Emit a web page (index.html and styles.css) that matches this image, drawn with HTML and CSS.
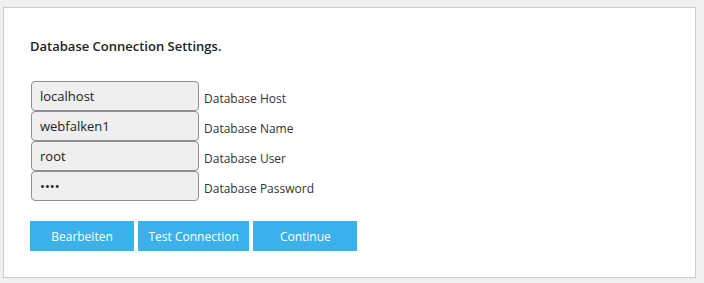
FILE: index.html
```html
<!DOCTYPE html>
<html lang="de">
<head>
    <meta charset="UTF-8">
    <meta name="viewport" content="width=device-width, initial-scale=1.0">
    <title>Database Connection</title>
    <link rel="stylesheet" href="styles.css">
</head>
<body>
    <div class="setup-box">
        <h2 class="setup-title">Database Connection Settings.</h2>

        <form class="db-form">
            <div class="field-row">
                <input type="text" class="db-input" value="localhost">
                <label class="db-label">Database Host</label>
            </div>
            <div class="field-row">
                <input type="text" class="db-input" value="webfalken1">
                <label class="db-label">Database Name</label>
            </div>
            <div class="field-row">
                <input type="text" class="db-input" value="root">
                <label class="db-label">Database User</label>
            </div>
            <div class="field-row">
                <input type="password" class="db-input" value="root">
                <label class="db-label">Database Password</label>
            </div>

            <div class="button-row">
                <button type="button" class="action-btn">Bearbeiten</button>
                <button type="button" class="action-btn">Test Connection</button>
                <button type="button" class="action-btn">Continue</button>
            </div>
        </form>
    </div>
</body>
</html>
```

FILE: styles.css
```css
:root {
    --page-bg: #f0f0f0;
    --box-border: #cccccc;
    --input-bg: #efefef;
    --input-border: #8f8f8f;
    --button-color: #3bb1eb;
    --text-color: #222222;
}

body {
    margin: 0;
    background-color: var(--page-bg);
    font-family: 'Open Sans', 'Noto Sans', sans-serif;
    color: var(--text-color);
}

.setup-box {
    margin: 7px 0 0 3px;
    width: 693px;
    height: 271px;
    background: white;
    border: 1px solid var(--box-border);
    padding: 0 26px;
    box-sizing: border-box;
}

.setup-title {
    margin: 0;
    padding-top: 29px;
    font-size: 13px;
    font-weight: 600;
    line-height: 18px;
}

.db-form {
    margin-top: 26px;
}

.field-row {
    display: flex;
    align-items: center;
    margin-left: 1px;
}

.db-input {
    width: 168px;
    height: 30px;
    box-sizing: border-box;
    padding: 0 8px;
    border: 1px solid var(--input-border);
    border-radius: 4px;
    background: var(--input-bg);
    font-family: inherit;
    font-size: 13px;
    color: var(--text-color);
}

.db-label {
    margin-left: 5px;
    padding-top: 5px;
    font-size: 12px;
    color: #333333;
}

.button-row {
    display: flex;
    gap: 4px;
    margin-top: 20px;
}

.action-btn {
    min-width: 104px;
    height: 30px;
    padding: 0 10.5px;
    border: none;
    background: var(--button-color);
    color: white;
    font-family: inherit;
    font-size: 12px;
    cursor: pointer;
}
```
